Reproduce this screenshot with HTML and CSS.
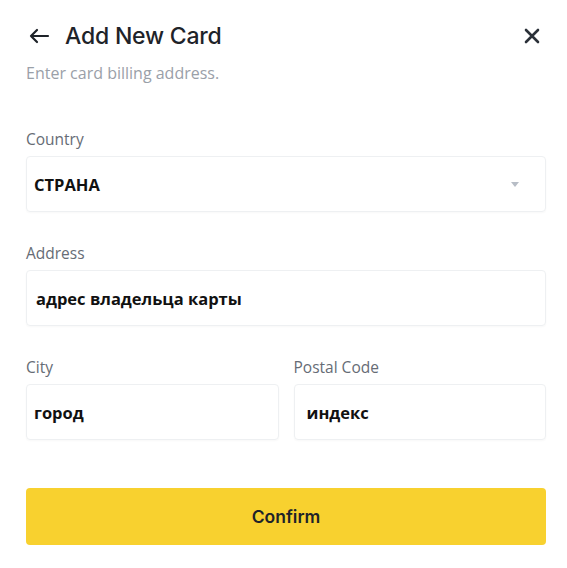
FILE: index.html
```html
<!DOCTYPE html>
<html lang="en">
<head>
<meta charset="utf-8">
<title>Add New Card</title>
<link rel="stylesheet" href="styles.css">
</head>
<body>
<div class="page">
  <div class="header">
    <div class="title-group">
      <svg class="back" width="22" height="16" viewBox="0 0 22 16" fill="none" stroke="#1e2329" stroke-width="2.2" stroke-linecap="round" stroke-linejoin="round"><path d="M20 8H3M9 2L3 8l6 6"/></svg>
      <h1 class="title">Add New Card</h1>
    </div>
    <svg class="close" width="16" height="16" viewBox="0 0 16 16" fill="none" stroke="#2b3139" stroke-width="2.6" stroke-linecap="round"><path d="M2 2l12 12M14 2L2 14"/></svg>
  </div>
  <p class="subtitle">Enter card billing address.</p>

  <div class="field first">
    <div class="label">Country</div>
    <div class="box select">
      <span class="value">СТРАНА</span>
      <svg class="caret" width="8" height="5" viewBox="0 0 8 5"><path d="M0 0h8L4 5z" fill="#b7bdc6"/></svg>
    </div>
  </div>

  <div class="field">
    <div class="label">Address</div>
    <div class="box"><span class="value indent-sm">адрес владельца карты</span></div>
  </div>

  <div class="row">
    <div class="field">
      <div class="label">City</div>
      <div class="box"><span class="value">город</span></div>
    </div>
    <div class="field">
      <div class="label">Postal Code</div>
      <div class="box"><span class="value indent">индекс</span></div>
    </div>
  </div>

  <button class="confirm">Confirm</button>
</div>
</body>
</html>
```

FILE: styles.css
```css
* { box-sizing: border-box; }
html, body { margin: 0; padding: 0; background: #fff; }
body { font-family: "Open Sans", "Noto Sans", sans-serif; color: #1e2329; }
.page { padding: 21px 21px 0 26px; }
.header { display: flex; align-items: center; justify-content: space-between; height: 30px; }
.title-group { display: flex; align-items: center; }
.back { margin-left: 2px; margin-right: 15px; }
.title { margin: 0; font-family: "Inter", "Roboto", sans-serif; font-size: 23px; font-weight: 500; color: #1e2329; letter-spacing: -0.2px; }
.close { margin-right: 6px; }
.subtitle { margin: 13px 0 0; font-size: 16px; line-height: 18px; color: #9aa0a8; }
.field { display: flex; flex-direction: column; margin-top: 31px; }
.field.first { margin-top: 47px; }
.label { font-size: 15.5px; line-height: 20px; color: #666c75; margin-bottom: 7px; }
.box { height: 56px; border: 1px solid #eef0f2; border-radius: 4px; display: flex; align-items: center; padding: 0 8px 0 7px; box-shadow: 0 1px 2px rgba(0,0,0,0.03); }
.select { justify-content: space-between; padding-right: 26px; }
.value { font-size: 16.5px; font-weight: 700; color: #111; }
.indent { padding-left: 5px; }
.indent-sm { padding-left: 2px; }
.row { display: grid; grid-template-columns: 1fr 1fr; column-gap: 15px; }
.confirm { display: block; width: 100%; height: 57px; margin-top: 48px; border: 0; border-radius: 4px; background: #f8d12f; font-family: "Inter", "Roboto", sans-serif; font-size: 17.5px; font-weight: 600; color: #1e2329; }
```
